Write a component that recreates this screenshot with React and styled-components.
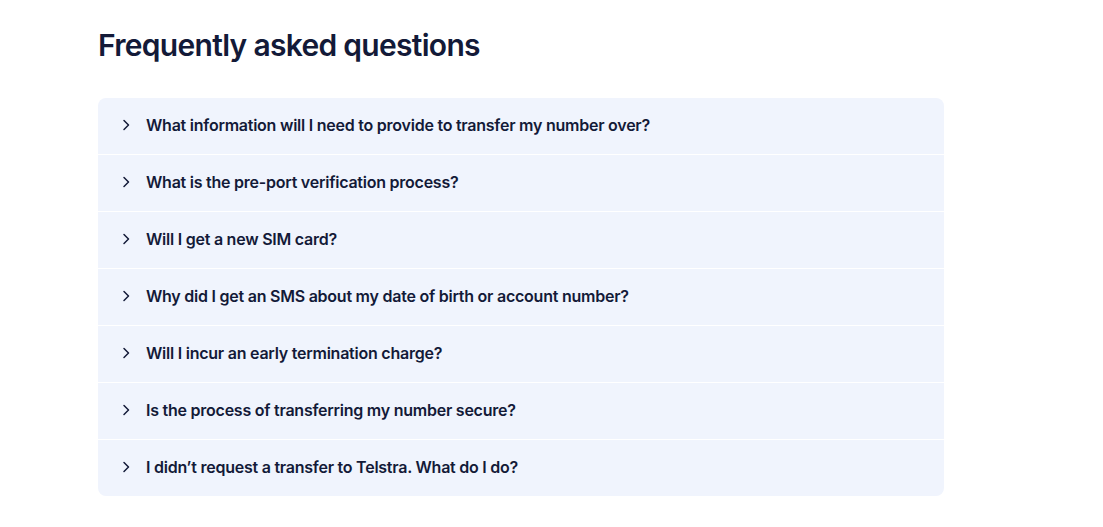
import React from 'react';
import styled, { createGlobalStyle } from 'styled-components';

const GlobalStyle = createGlobalStyle`
  body {
    margin: 0;
    background: #ffffff;
    font-family: Inter, "Noto Sans", sans-serif;
    color: #131a38;
  }
`

const Page = styled.main`
  padding: 27px 0 0 98px;
  width: 846px;
`

const Title = styled.h2`
  margin: 0 0 35px;
  font-size: 30px;
  line-height: 36px;
  font-weight: 600;
  letter-spacing: -0.7px;
  color: #131a38;
`

const List = styled.div`
  display: flex;
  flex-direction: column;
  gap: 1px;
  background: #ffffff;
  border-radius: 8px;
  overflow: hidden;
`

const Row = styled.button`
  display: flex;
  align-items: center;
  gap: 12px;
  height: 56px;
  padding: 0 0 3px 20px;
  border: none;
  background: #f0f4fd;
  font-family: inherit;
  font-size: 16px;
  font-weight: 600;
  letter-spacing: -0.24px;
  color: #131a38;
  text-align: left;
  cursor: pointer;
`

const Chevron = () => (
  <svg width="16" height="16" viewBox="0 0 16 16" fill="none" stroke="#131a38" strokeWidth="1.5" strokeLinecap="round" strokeLinejoin="round">
    <path d="M6 3.5l4.5 4.5L6 12.5" />
  </svg>
)

const questions = [
  'What information will I need to provide to transfer my number over?',
  'What is the pre-port verification process?',
  'Will I get a new SIM card?',
  'Why did I get an SMS about my date of birth or account number?',
  'Will I incur an early termination charge?',
  'Is the process of transferring my number secure?',
  'I didn’t request a transfer to Telstra. What do I do?',
]

export default function App() {
  return (
    <>
      <GlobalStyle />
      <Page>
        <Title>Frequently asked questions</Title>
        <List>
          {questions.map((q) => (
            <Row key={q}>
              <Chevron />
              {q}
            </Row>
          ))}
        </List>
      </Page>
    </>
  )
}
